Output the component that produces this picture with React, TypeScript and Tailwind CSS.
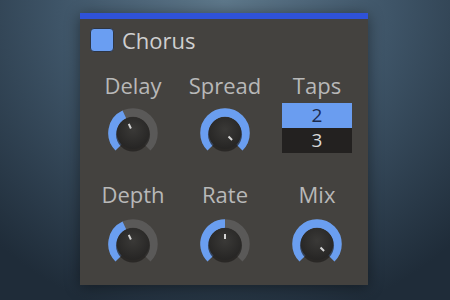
import React from "react";

const CX = 26;
const CY = 26;

function pt(r: number, deg: number) {
  const a = (deg * Math.PI) / 180;
  return [CX + r * Math.sin(a), CY - r * Math.cos(a)];
}

function arc(r: number, from: number, to: number) {
  const [x1, y1] = pt(r, from);
  const [x2, y2] = pt(r, to);
  const large = to - from > 180 ? 1 : 0;
  return `M ${x1} ${y1} A ${r} ${r} 0 ${large} 1 ${x2} ${y2}`;
}

function Knob({ value }: { value: number }) {
  const [ix1, iy1] = pt(5, value);
  const [ix2, iy2] = pt(10, value);
  return (
    <svg width="52" height="52" viewBox="0 0 52 52">
      <defs>
        <radialGradient id="kb" cx="50%" cy="40%" r="60%">
          <stop offset="0%" stopColor="#3a3937" />
          <stop offset="100%" stopColor="#262524" />
        </radialGradient>
      </defs>
      <path d={arc(20.5, -135, 135)} stroke="#5a5958" strokeWidth="8.5" fill="none" />
      <path d={arc(20.5, -135, value)} stroke="#6a9ef0" strokeWidth="8.5" fill="none" />
      <circle cx={CX} cy={CY + 1.5} r="17" fill="#1f1e1d" opacity="0.7" />
      <circle cx={CX} cy={CY} r="16" fill="url(#kb)" />
      <line x1={ix1} y1={iy1} x2={ix2} y2={iy2} stroke="#d4d4d4" strokeWidth="2" strokeLinecap="butt" />
    </svg>
  );
}

function Label({ children }: { children: React.ReactNode }) {
  return (
    <div className="text-[22px] leading-[30px] text-[#b8b8b8]" style={{}}>
      {children}
    </div>
  );
}

export default function App() {
  return (
    <div
      className="w-[450px] h-[300px] overflow-hidden pt-[13px] pl-[80px] bg-[radial-gradient(ellipse_75%_110%_at_50%_0%,#5e788b_0%,#3e5467_50%,#1f2c39_100%)]"
      style={{ fontFamily: '"Open Sans", "Noto Sans", sans-serif' }}
    >
      <div className="w-[288px] h-[272px] bg-[#44423f] shadow-[0_2px_14px_rgba(0,0,0,0.45)] flex flex-col">
        <div className="h-[6px] bg-[#2f52d8]" />
        <div className="flex items-center gap-2 pl-[10px] mt-[5.5px] h-[30px]">
          <div className="w-[24px] h-[24px] rounded-[4px] bg-[#6a9ef2] border border-[#2d3543]" />
          <div className="text-[22px] leading-[30px] text-[#cfcfcf]">Chorus</div>
        </div>
        <div className="grid grid-cols-[92px_92px_92px] pl-[7px] mt-[15px]">
          <div className="flex flex-col items-center">
            <Label>Delay</Label>
            <div className="mt-[7.5px]">
              <Knob value={-25} />
            </div>
          </div>
          <div className="flex flex-col items-center">
            <Label>Spread</Label>
            <div className="mt-[7.5px]">
              <Knob value={135} />
            </div>
          </div>
          <div className="flex flex-col items-center">
            <Label>Taps</Label>
            <div className="mt-[3.5px] w-[70px] flex flex-col text-[19px] leading-[25px] text-center">
              <div className="h-[25px] bg-[#6a9df0] text-[#1b2a4c]">2</div>
              <div className="h-[25px] bg-[#232120] text-[#d8d8d8]">3</div>
            </div>
          </div>
        </div>
        <div className="grid grid-cols-[92px_92px_92px] pl-[7px] mt-[19.5px]">
          <div className="flex flex-col items-center">
            <Label>Depth</Label>
            <div className="mt-[9.5px]">
              <Knob value={-25} />
            </div>
          </div>
          <div className="flex flex-col items-center">
            <Label>Rate</Label>
            <div className="mt-[9.5px]">
              <Knob value={0} />
            </div>
          </div>
          <div className="flex flex-col items-center">
            <Label>Mix</Label>
            <div className="mt-[9.5px]">
              <Knob value={135} />
            </div>
          </div>
        </div>
      </div>
    </div>
  );
}
